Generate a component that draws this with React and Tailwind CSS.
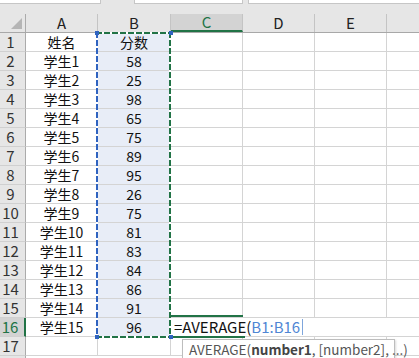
import React from 'react';

const rows = [
  ['姓名', '分数'],
  ['学生1', '58'],
  ['学生2', '25'],
  ['学生3', '98'],
  ['学生4', '65'],
  ['学生5', '75'],
  ['学生6', '89'],
  ['学生7', '95'],
  ['学生8', '26'],
  ['学生9', '75'],
  ['学生10', '81'],
  ['学生11', '83'],
  ['学生12', '84'],
  ['学生13', '86'],
  ['学生14', '91'],
  ['学生15', '96'],
  ['', ''],
];

const font = { fontFamily: '"Noto Sans CJK SC", "Liberation Sans", sans-serif' };

function Corner() {
  return (
    <div className="w-[26px] shrink-0 border-r border-[#ababab] relative">
      <svg className="absolute left-0 top-0" width="26" height="19" viewBox="0 0 26 19">
        <polygon points="22,4 22,15 11,15" fill="#b5b5b5" />
      </svg>
    </div>
  );
}

function ColHeader({ label, w, active }) {
  return (
    <div
      className={`${w} shrink-0 flex items-center justify-center text-[15px] ${
        active
          ? 'bg-[#d3d3d3] text-[#217346] border-b-2 border-[#217346] border-r border-r-[#c4c4c4]'
          : 'text-[#222] border-r border-[#c4c4c4]'
      }`}
    >
      {label}
    </div>
  );
}

function Row({ n, a, b }) {
  const active = n === 16;
  return (
    <div className="flex h-[19px] shrink-0">
      <div
        className={`w-[26px] shrink-0 flex items-center justify-center pr-[4px] text-[15px] border-b border-[#d0d0d0] ${
          active
            ? 'bg-[#d3d3d3] text-[#217346] border-r-2 border-r-[#217346]'
            : 'bg-[#e6e6e6] text-[#333] border-r border-r-[#ababab]'
        }`}
      >
        {n}
      </div>
      <div className="w-[72px] shrink-0 flex items-center justify-center text-[14px] text-[#111] border-r border-b border-[#d4d4d4]">
        {a}
      </div>
      <div
        className={`w-[73px] shrink-0 flex items-center justify-center text-[14px] text-[#111] border-r border-b border-[#d4d4d4] ${
          n <= 16 ? 'bg-[#e8edf7]' : ''
        }`}
      >
        {b}
      </div>
      {active ? (
        <div className="flex-1 flex items-center pl-[3px] text-[15px] whitespace-nowrap border-b border-[#d4d4d4]">
          <span className="text-[#111]">=AVERAGE(</span>
          <span className="text-[#4f86d4]">B1:B16</span>
          <span className="ml-[2px] w-px h-[16px] bg-[#7fa6dc]" />
        </div>
      ) : (
        <>
          <div className="w-[72px] shrink-0 border-r border-b border-[#d4d4d4]" />
          <div className="w-[72px] shrink-0 border-r border-b border-[#d4d4d4]" />
          <div className="w-[72px] shrink-0 border-r border-b border-[#d4d4d4]" />
          <div className="w-[72px] shrink-0 border-r border-b border-[#d4d4d4]" />
        </>
      )}
    </div>
  );
}

export default function App() {
  return (
    <div className="w-[419px] h-[358px] overflow-hidden bg-white relative" style={font}>
      {/* formula bar remnants */}
      <div className="flex h-[4px] bg-[#e6e6e6]">
        <div className="w-[101px] bg-white border-r border-b border-[#c6c6c6]" />
        <div className="w-[33px]" />
        <div className="w-[109px] bg-white border-l border-r border-b border-[#c6c6c6]" />
        <div className="w-[5px]" />
        <div className="flex-1 bg-white border-l border-b border-[#c6c6c6]" />
      </div>
      <div className="h-[10px] bg-[#e6e6e6]" />

      {/* column headers */}
      <div className="flex h-[19px] bg-[#e6e6e6] border-b border-[#a8a8a8]">
        <Corner />
        <ColHeader label="A" w="w-[72px]" />
        <ColHeader label="B" w="w-[73px]" />
        <ColHeader label="C" w="w-[72px]" active />
        <ColHeader label="D" w="w-[72px]" />
        <ColHeader label="E" w="w-[72px]" />
        <ColHeader label="" w="w-[72px]" />
      </div>

      {rows.map((r, i) => (
        <Row key={i} n={i + 1} a={r[0]} b={r[1]} />
      ))}
      <div className="flex h-[4px]">
        <div className="w-[26px] shrink-0 bg-[#e6e6e6] border-r border-[#ababab]" />
      </div>

      {/* copy marquee around B1:B16 */}
      <svg
        className="absolute left-[96px] top-[32px] pointer-events-none"
        width="76"
        height="306"
        viewBox="0 0 76 306"
      >
        <rect x="1" y="1" width="73" height="304" fill="none" stroke="#fff" strokeWidth="2" />
        <line x1="1" y1="0" x2="1" y2="306" stroke="#2f63c0" strokeWidth="2" strokeDasharray="6 2" />
        <line x1="74" y1="0" x2="74" y2="306" stroke="#217346" strokeWidth="2" strokeDasharray="6 2" />
        <line x1="0" y1="1" x2="76" y2="1" stroke="#217346" strokeWidth="2" strokeDasharray="6 2" />
        <line x1="0" y1="305" x2="76" y2="305" stroke="#217346" strokeWidth="2" strokeDasharray="6 2" />
      </svg>
      <div className="absolute left-[95px] top-[31px] w-[4px] h-[4px] bg-[#2f63c0]" />
      <div className="absolute left-[169px] top-[31px] w-[4px] h-[4px] bg-[#2f63c0]" />
      <div className="absolute left-[95px] top-[335px] w-[4px] h-[4px] bg-[#2f63c0]" />
      <div className="absolute left-[169px] top-[335px] w-[4px] h-[4px] bg-[#2f63c0]" />

      {/* active cell C16 borders */}
      <div className="absolute left-[171px] top-[315px] w-[72px] h-[2px] bg-[#217346]" />
      <div className="absolute left-[173px] top-[336px] w-[72px] h-[2px] bg-[#217346]" />

      {/* function tooltip */}
      <div className="absolute left-[182px] top-[339px] w-[213px] h-[19px] bg-white border-l border-t border-r border-[#bdbdbd] shadow-[1px_1px_2px_rgba(0,0,0,0.15)] pl-[6px] text-[13.5px] leading-[18px] text-[#555] whitespace-nowrap">
        AVERAGE(<span className="font-bold text-[#444]">number1</span>, [number2], ...)
      </div>
    </div>
  );
}
